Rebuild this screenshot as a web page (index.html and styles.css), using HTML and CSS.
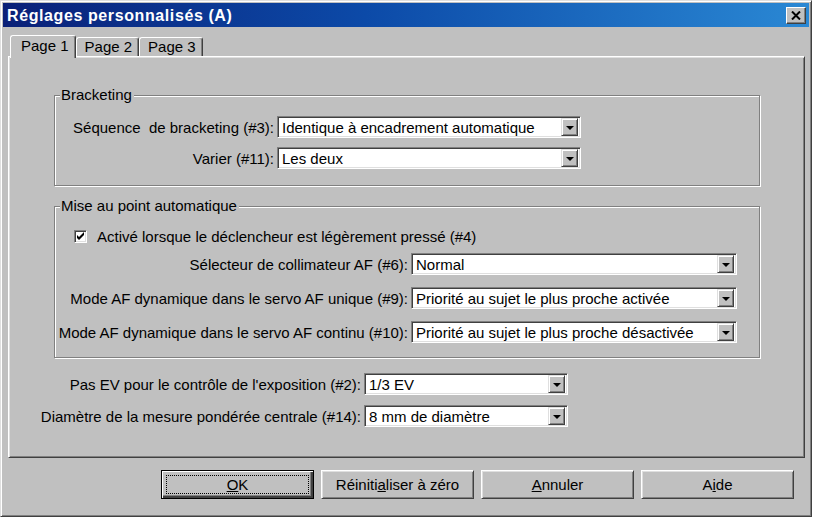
FILE: index.html
```html
<!DOCTYPE html>
<html lang="fr">
<head>
    <meta charset="UTF-8">
    <title>Réglages personnalisés (A)</title>
    <link rel="stylesheet" href="styles.css">
</head>
<body>
    <div class="window">
        <div class="titlebar">
            <span class="title">Réglages personnalisés (A)</span>
            <div class="close">
                <svg width="10" height="9" viewBox="0 0 10 9"><path d="M1 0.5 L9 8.5 M9 0.5 L1 8.5" stroke="#000" stroke-width="2"/></svg>
            </div>
        </div>

        <div class="body">
            <div class="tabs">
                <div class="tab active">Page 1</div>
                <div class="tab">Page 2</div>
                <div class="tab">Page 3</div>
            </div>

            <div class="panel">
                <fieldset class="group group-bracket">
                    <legend>Bracketing</legend>
                    <div class="rows">
                        <label>Séquence&nbsp; de bracketing (#3):</label>
                        <div class="combo"><span>Identique à encadrement automatique</span><i class="arrow"></i></div>
                        <label>Varier (#11):</label>
                        <div class="combo"><span>Les deux</span><i class="arrow"></i></div>
                    </div>
                </fieldset>

                <fieldset class="group group-af">
                    <legend>Mise au point automatique</legend>
                    <div class="rows">
                        <div class="check-row">
                            <span class="checkbox">
                                <svg width="9" height="9" viewBox="0 0 9 9"><path d="M1 3 L3 5 L8 0 L8 3 L3 8 L1 6 Z" fill="#000"/></svg>
                            </span>
                            <span>Activé lorsque le déclencheur est légèrement pressé (#4)</span>
                        </div>
                        <label>Sélecteur de collimateur AF (#6):</label>
                        <div class="combo"><span>Normal</span><i class="arrow"></i></div>
                        <label>Mode AF dynamique dans le servo AF unique (#9):</label>
                        <div class="combo"><span>Priorité au sujet le plus proche activée</span><i class="arrow"></i></div>
                        <label>Mode AF dynamique dans le servo AF continu (#10):</label>
                        <div class="combo"><span>Priorité au sujet le plus proche désactivée</span><i class="arrow"></i></div>
                    </div>
                </fieldset>

                <div class="rows rows-bottom">
                    <label>Pas EV pour le contrôle de l'exposition (#2):</label>
                    <div class="combo"><span>1/3 EV</span><i class="arrow"></i></div>
                    <label>Diamètre de la mesure pondérée centrale (#14):</label>
                    <div class="combo"><span>8 mm de diamètre</span><i class="arrow"></i></div>
                </div>
            </div>

            <div class="buttons">
                <div class="btn default"><span class="focus"><u>O</u>K</span></div>
                <div class="btn">Réiniti<u>a</u>liser à zéro</div>
                <div class="btn"><u>A</u>nnuler</div>
                <div class="btn">A<u>i</u>de</div>
            </div>
        </div>
    </div>
</body>
</html>
```

FILE: styles.css
```css
* {
    margin: 0;
    padding: 0;
    box-sizing: border-box;
}

body {
    font-family: 'Liberation Sans', Arial, sans-serif;
    font-size: 15px;
    color: #000;
    background: #fff;
}

.window {
    width: 812px;
    height: 517px;
    background: #c0c0c0;
    border: 1px solid;
    border-color: #dfdfdf #404040 #404040 #dfdfdf;
    box-shadow: inset 1px 1px 0 #fff, inset -1px -1px 0 #808080;
    padding: 2px;
    display: flex;
    flex-direction: column;
}

/* title bar */
.titlebar {
    height: 24px;
    background: linear-gradient(to right, #0a2078 0%, #0c4aa8 45%, #2a88d4 100%);
    display: flex;
    align-items: center;
    padding: 1px 3px 0 4px;
}

.title {
    color: #fff;
    font-weight: bold;
    font-size: 16px;
    letter-spacing: 0.6px;
}

.close {
    margin-left: auto;
    width: 20px;
    height: 17px;
    background: #c0c0c0;
    border: 1px solid;
    border-color: #fff #404040 #404040 #fff;
    box-shadow: inset -1px -1px 0 #808080;
    display: flex;
    align-items: center;
    justify-content: center;
}

.body {
    flex: 1;
    display: flex;
    flex-direction: column;
    padding: 8px 4px 0 5px;
}

/* tabs */
.tabs {
    display: flex;
    align-items: flex-end;
    padding-left: 2px;
    height: 21px;
    position: relative;
    z-index: 1;
}

.tab {
    height: 19px;
    line-height: 18px;
    padding: 0 6px 0 8px;
    border: 1px solid;
    border-bottom: none;
    border-color: #fff #404040 #404040 #fff;
    border-radius: 3px 3px 0 0;
    box-shadow: inset -1px 0 0 #808080;
}

.tab.active {
    height: 23px;
    margin-bottom: -2px;
    padding: 0 6px 0 10px;
    background: #c0c0c0;
    line-height: 20px;
}

/* tab page */
.panel {
    flex: 1;
    border: 1px solid;
    border-color: #fff #404040 #404040 #fff;
    box-shadow: inset 1px 1px 0 #dfdfdf, inset -1px -1px 0 #808080;
    padding-top: 30px;
}

.group {
    margin: 0 44px 0 45px;
    border: 1px solid #808080;
    box-shadow: inset 1px 1px 0 #fff, 1px 1px 0 #fff;
    padding: 13px 0 16px;
}

.group legend {
    margin-left: 5px;
    padding: 0 2px 0 1px;
    line-height: 16px;
    background: #c0c0c0;
}

.group-af {
    margin-top: 12px;
    padding-top: 14px;
    padding-bottom: 14px;
}

.rows {
    display: grid;
    align-items: center;
    column-gap: 3px;
}

.rows label {
    text-align: right;
    white-space: nowrap;
}

.group-bracket .rows {
    grid-template-columns: 219px 304px;
    row-gap: 9px;
}

.group-af .rows {
    grid-template-columns: 353px 326px;
    row-gap: 12px;
}

.rows-bottom {
    margin-top: 15px;
    grid-template-columns: 352px 204px;
    row-gap: 10px;
}

.check-row {
    grid-column: 1 / -1;
    display: flex;
    align-items: center;
    gap: 10px;
    padding-left: 19px;
    height: 16px;
    margin-bottom: -3px;
}

.checkbox {
    width: 13px;
    height: 13px;
    background: #fff;
    border: 1px solid;
    border-color: #808080 #fff #fff #808080;
    box-shadow: inset 1px 1px 0 #404040, inset -1px -1px 0 #dfdfdf;
    display: flex;
    align-items: center;
    justify-content: center;
}

/* combo boxes */
.combo {
    height: 22px;
    background: #fff;
    border: 1px solid;
    border-color: #808080 #fff #fff #808080;
    box-shadow: inset 1px 1px 0 #404040, inset -1px -1px 0 #dfdfdf;
    padding: 2px 2px 2px 4px;
    display: flex;
    align-items: center;
    white-space: nowrap;
}

.arrow {
    margin-left: auto;
    width: 17px;
    height: 18px;
    background: #c0c0c0;
    border: 1px solid;
    border-color: #dfdfdf #404040 #404040 #dfdfdf;
    box-shadow: inset 1px 1px 0 #fff, inset -1px -1px 0 #808080;
    display: flex;
    align-items: center;
    justify-content: center;
}

.arrow::after {
    content: '';
    border-left: 4px solid transparent;
    border-right: 4px solid transparent;
    border-top: 4px solid #000;
    margin-top: 1px;
}

/* dialog buttons */
.buttons {
    display: flex;
    justify-content: flex-end;
    gap: 7px;
    padding-right: 11px;
    margin: 12px 0 15px;
}

.btn {
    width: 153px;
    height: 29px;
    border: 1px solid;
    border-color: #fff #404040 #404040 #fff;
    box-shadow: inset 1px 1px 0 #dfdfdf, inset -1px -1px 0 #808080;
    display: flex;
    align-items: center;
    justify-content: center;
}

.btn.default {
    border: 1px solid #000;
    box-shadow: inset 1px 1px 0 #fff, inset -2px -2px 0 #404040, inset -3px -3px 0 #808080;
    padding: 4px;
}

.focus {
    flex: 1;
    align-self: stretch;
    border: 1px dotted #000;
    display: flex;
    align-items: center;
    justify-content: center;
}
```
